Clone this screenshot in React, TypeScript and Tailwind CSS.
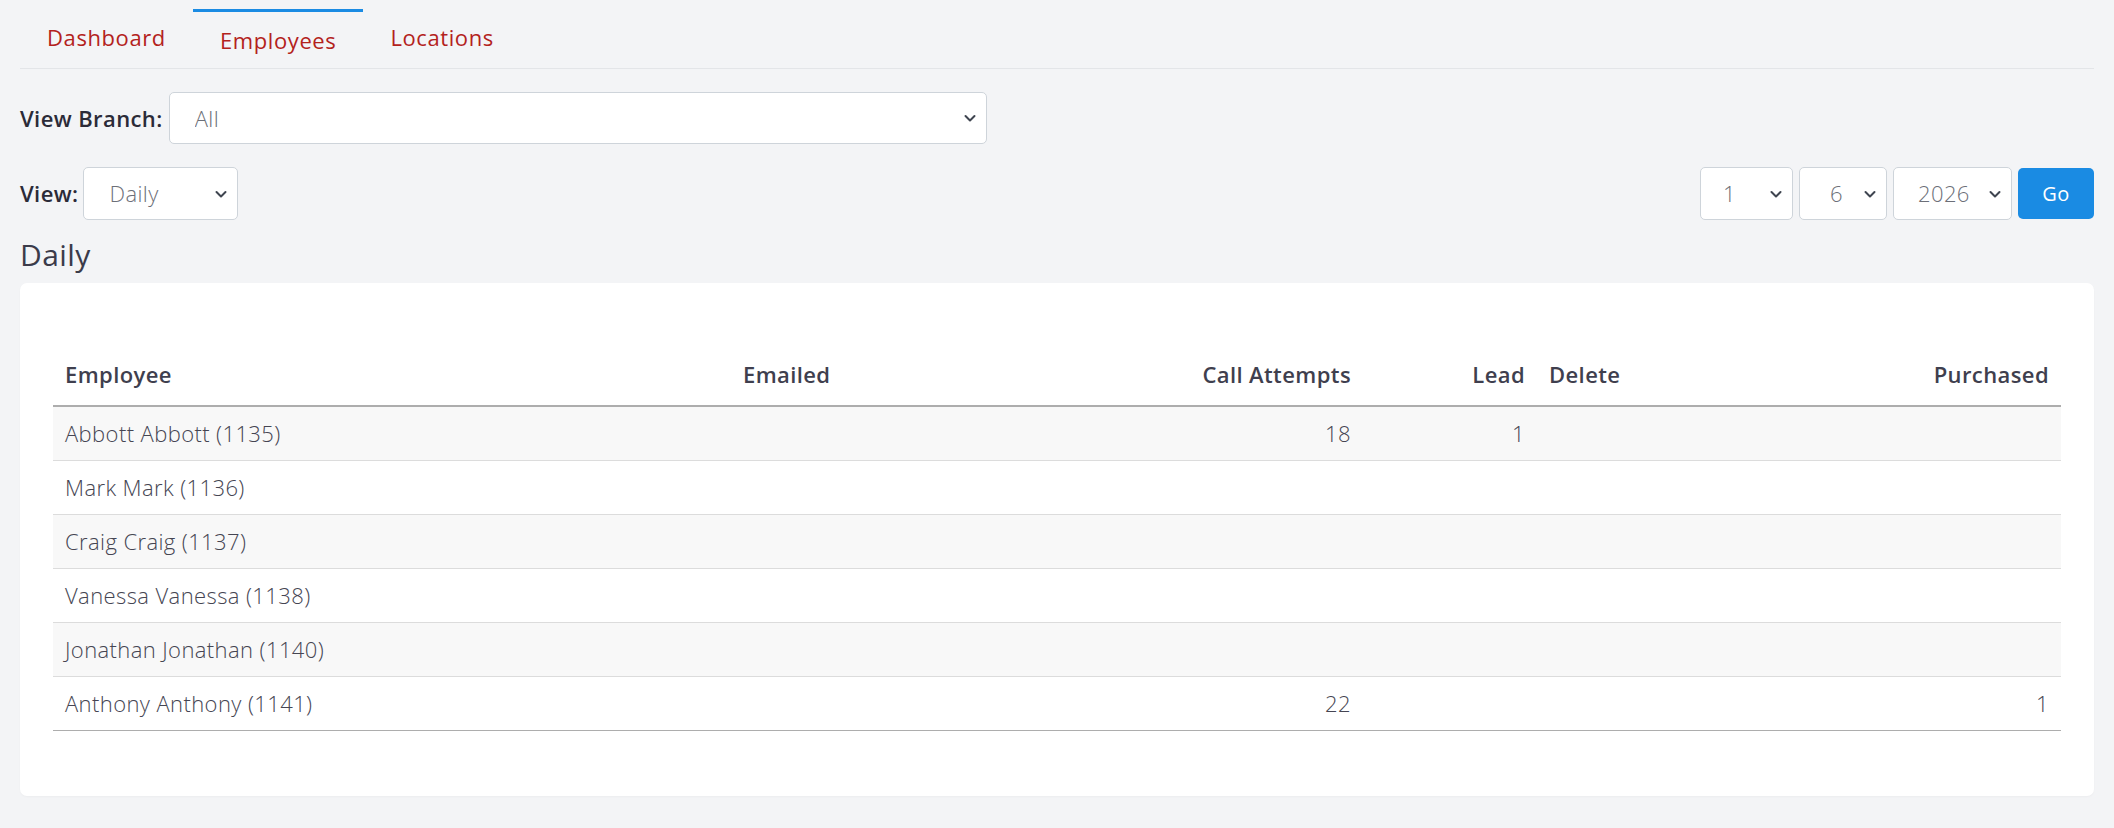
import React from 'react';

type Row = {
  name: string;
  emailed?: number;
  calls?: number;
  lead?: number;
  deleted?: number;
  purchased?: number;
};

const rows: Row[] = [
  { name: 'Abbott Abbott (1135)', calls: 18, lead: 1 },
  { name: 'Mark Mark (1136)' },
  { name: 'Craig Craig (1137)' },
  { name: 'Vanessa Vanessa (1138)' },
  { name: 'Jonathan Jonathan (1140)' },
  { name: 'Anthony Anthony (1141)', calls: 22, purchased: 1 },
];

const Chevron = () => (
  <svg
    className="pointer-events-none absolute right-[11px] top-1/2 -translate-y-1/2"
    width="12"
    height="8"
    viewBox="0 0 12 8"
    fill="none"
  >
    <path d="M1.5 2l4.5 4.5 4.5-4.5" stroke="#3f4550" strokeWidth="2" strokeLinecap="round" strokeLinejoin="round" />
  </svg>
);

interface SelectProps {
  value: string;
  options: string[];
  className: string;
  padClass?: string;
}

const Select: React.FC<SelectProps> = ({ value, options, className, padClass = 'pl-[25px]' }) => (
  <div className={`relative ${className}`}>
    <select
      defaultValue={value}
      className={`h-full w-full appearance-none rounded-[5px] border border-[#ced4da] bg-white ${padClass} pr-[30px] text-[22px] font-light tracking-[0.4px] text-[#6c6f78] outline-none`}
    >
      {options.map((o) => (
        <option key={o}>{o}</option>
      ))}
    </select>
    <Chevron />
  </div>
);

const tabs = ['Dashboard', 'Employees', 'Locations'];

export default function App() {
  return (
    <div
      className="min-h-screen bg-[#f3f4f6] px-[20px] tracking-[0.4px] text-[#2b2b38]"
      style={{ fontFamily: '"Open Sans", "Liberation Sans", sans-serif' }}
    >
      {/* Tabs */}
      <ul className="flex h-[69px] items-end border-b border-[#e3e5e8]">
        {tabs.map((t) => {
          const active = t === 'Employees';
          return (
            <li
              key={t}
              className={
                active
                  ? 'border-t-[3px] border-[#1a8be3] px-[27px] pt-[14px] pb-[14px] text-[22px] leading-[28px] tracking-[0.6px] text-[#b3221c]'
                  : 'px-[27px] pb-[17px] text-[22px] leading-[28px] tracking-[0.6px] text-[#b3221c]'
              }
            >
              {t}
            </li>
          );
        })}
      </ul>

      {/* Branch filter */}
      <div className="mt-[23px] flex items-center gap-[6px]">
        <span className="text-[22px] font-semibold">View Branch:</span>
        <Select value="All" options={['All']} className="h-[52px] w-[818px]" />
      </div>

      {/* Period + date pickers */}
      <div className="mt-[23px] flex items-center justify-between">
        <div className="flex items-center gap-[5px]">
          <span className="text-[22px] font-semibold">View:</span>
          <Select value="Daily" options={['Daily', 'Weekly', 'Monthly']} className="h-[53px] w-[155px]" />
        </div>
        <div className="flex items-center gap-[6px]">
          <Select value="1" options={['1']} className="h-[53px] w-[93px]" padClass="pl-[22px]" />
          <Select value="6" options={['6']} className="h-[53px] w-[88px]" padClass="pl-[30px]" />
          <Select value="2026" options={['2026']} className="h-[53px] w-[119px]" padClass="pl-[24px]" />
          <button className="h-[51px] w-[76px] rounded-[5px] bg-[#1a8be3] text-[20px] text-white">Go</button>
        </div>
      </div>

      <h2 className="mt-[15px] text-[30px] leading-[40px] text-[#3b3b4a]">Daily</h2>

      {/* Results card */}
      <div className="mt-[8px] rounded-[7px] bg-white px-[33px] pt-[69px] pb-[65px] shadow-[0_1px_2px_rgba(0,0,0,0.03)]">
        <table className="w-full table-fixed border-collapse text-[22px]">
          <colgroup>
            <col className="w-[678px]" />
            <col className="w-[459px]" />
            <col className="w-[173px]" />
            <col className="w-[174px]" />
            <col className="w-[163px]" />
            <col />
          </colgroup>
          <thead>
            <tr className="h-[54px] border-b-2 border-[#adadad] text-[#3f3f4e]">
              <th className="px-[12px] pb-[8px] text-left font-semibold">Employee</th>
              <th className="px-[12px] pb-[8px] text-left font-semibold">Emailed</th>
              <th className="px-[12px] pb-[8px] text-right font-semibold">Call Attempts</th>
              <th className="px-[12px] pb-[8px] text-right font-semibold">Lead</th>
              <th className="px-[12px] pb-[8px] text-left font-semibold">Delete</th>
              <th className="px-[12px] pb-[8px] text-right font-semibold">Purchased</th>
            </tr>
          </thead>
          <tbody className="font-light text-[#454552]">
            {rows.map((r, i) => (
              <tr
                key={r.name}
                className={`h-[54px] border-b ${i === rows.length - 1 ? 'border-[#adadad]' : 'border-[#dcdcdc]'} ${i % 2 === 0 ? 'bg-[#f8f8f8]' : 'bg-white'}`}
              >
                <td className="px-[12px]">{r.name}</td>
                <td className="px-[12px]">{r.emailed ?? ''}</td>
                <td className="px-[12px] text-right">{r.calls ?? ''}</td>
                <td className="px-[12px] text-right">{r.lead ?? ''}</td>
                <td className="px-[12px]">{r.deleted ?? ''}</td>
                <td className="px-[12px] text-right">{r.purchased ?? ''}</td>
              </tr>
            ))}
          </tbody>
        </table>
      </div>
    </div>
  );
}
